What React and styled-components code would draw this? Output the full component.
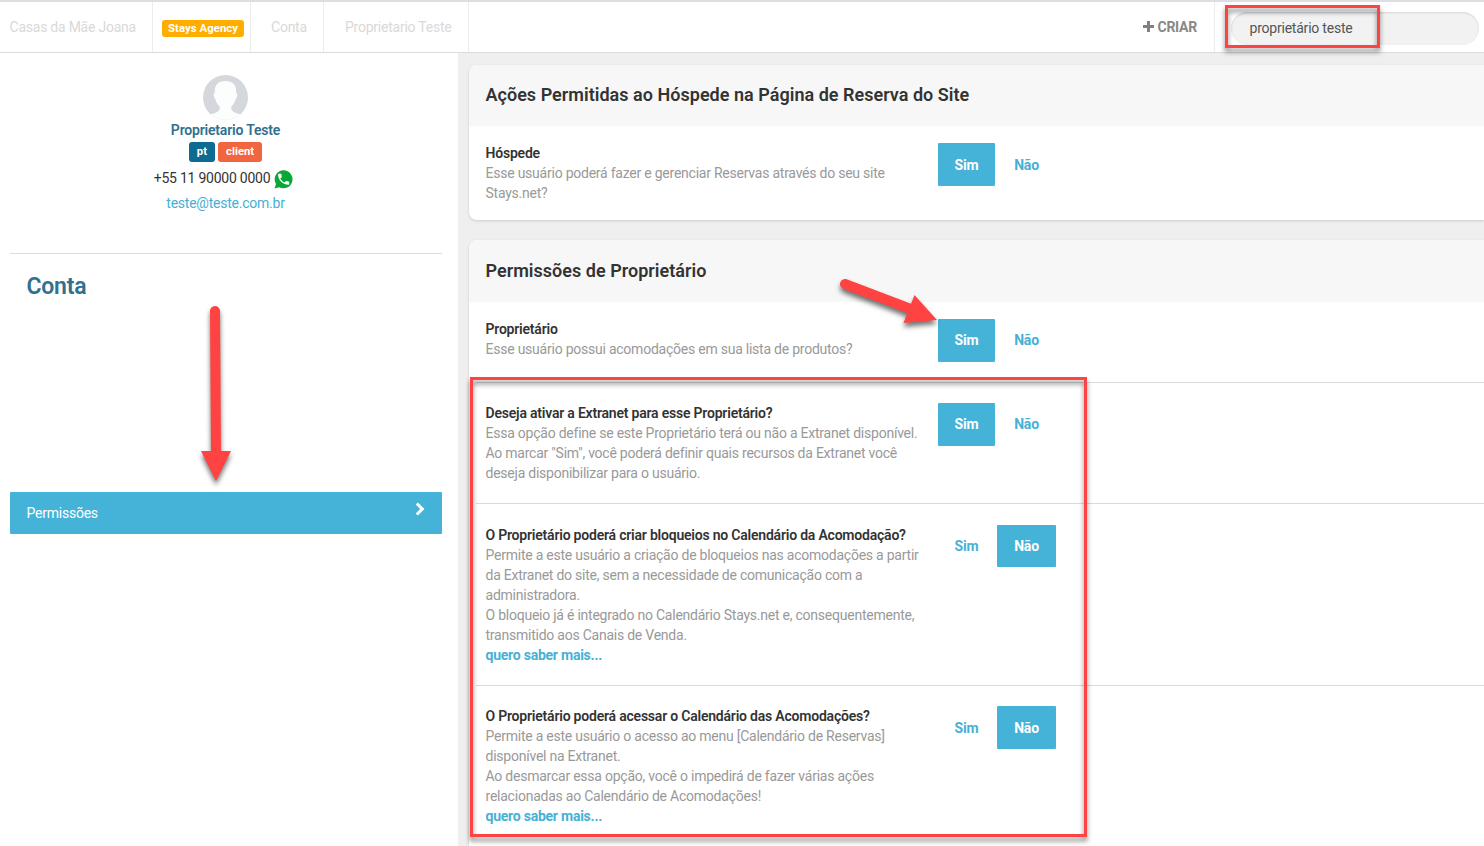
import React, { useState } from 'react'
import styled, { createGlobalStyle } from 'styled-components'

const permissions = [
    {
        title: 'Proprietário',
        lines: ['Esse usuário possui acomodações em sua lista de produtos?'],
        value: 'Sim',
        top: 17,
        lift: 2,
    },
    {
        title: 'Deseja ativar a Extranet para esse Proprietário?',
        lines: ['Essa opção define se este Proprietário terá ou não a Extranet disponível. Ao marcar "Sim", você poderá definir quais recursos da Extranet você deseja disponibilizar para o usuário.'],
        value: 'Sim',
        top: 20,
        lift: 2,
    },
    {
        title: 'O Proprietário poderá criar bloqueios no Calendário da Acomodação?',
        lines: [
            'Permite a este usuário a criação de bloqueios nas acomodações a partir da Extranet do site, sem a necessidade de comunicação com a administradora.',
            'O bloqueio já é integrado no Calendário Stays.net e, consequentemente, transmitido aos Canais de Venda.',
        ],
        more: true,
        value: 'Não',
        top: 21,
        lift: 1,
        height: 42,
    },
    {
        title: 'O Proprietário poderá acessar o Calendário das Acomodações?',
        lines: [
            'Permite a este usuário o acesso ao menu [Calendário de Reservas] disponível na Extranet.',
            'Ao desmarcar essa opção, você o impedirá de fazer várias ações relacionadas ao Calendário de Acomodações!',
        ],
        more: true,
        value: 'Não',
        top: 20,
    },
]

function Permission({ title, lines, more, value, top, lift = 0, height = 43, divided }) {
    const [selected, setSelected] = useState(value)
    return (
        <Row $top={top} $divided={divided}>
            <Description>
                <h3>{title}</h3>
                {lines.map(line => <p key={line}>{line}</p>)}
                {more && <a>quero saber mais...</a>}
            </Description>
            <Toggle>
                <Option $width={57} $height={height} $lift={lift} $active={selected === 'Sim'} onClick={() => setSelected('Sim')}>Sim</Option>
                <Option $width={59} $height={height} $lift={lift} $active={selected === 'Não'} onClick={() => setSelected('Não')}>Não</Option>
            </Toggle>
        </Row>
    )
}

function App() {
    const [search, setSearch] = useState('proprietário teste')
    return (
        <Page>
            <GlobalStyle />
            <TopBar>
                <Crumb $width={153} $left={9.5}>Casas da Mãe Joana</Crumb>
                <Crumb $width={98} $left={9}><Agency $color="#ffae00" $size={17} $pad={6}>Stays Agency</Agency></Crumb>
                <Crumb $width={73} $left={20}>Conta</Crumb>
                <Crumb $width={145} $left={21}>Proprietario Teste</Crumb>
                <Create>
                    <PlusIcon width="11" height="11" viewBox="0 0 11 11">
                        <path d="M4 0h3v4h4v3H7v4H4V7H0V4h4z" fill="#808080" />
                    </PlusIcon>
                    CRIAR
                </Create>
                <SearchArea>
                    <Search value={search} onChange={e => setSearch(e.target.value)} />
                </SearchArea>
            </TopBar>
            <Body>
                <Sidebar>
                    <Profile>
                        <Avatar width="45" height="45" viewBox="0 0 45 45">
                            <clipPath id="face"><circle cx="22.5" cy="22.5" r="22.5" /></clipPath>
                            <g clipPath="url(#face)">
                                <rect width="45" height="45" fill="#d4d7dc" />
                                <path d="M22.500 6C15 6 11.300 10.500 11.800 18c-1.800 0-1.500 4 0.500 6 0.800 3.500 2.700 6 4.500 7.800 0.400 4.200-3 5.700-9.300 7.700V46h30v-6.500c-6.300-2-9.700-3.500-9.300-7.700 1.800-1.800 3.700-4.300 4.500-7.800 2-2 2.300-6 0.500-6C33.700 10.500 30 6 22.500 6z" fill="#fcfdfd" />
                            </g>
                        </Avatar>
                        <Name>Proprietario Teste</Name>
                        <Tags>
                            <Badge $color="#0d6a90" $size={20} $pad={8}>pt</Badge>
                            <Badge $color="#f26541" $size={20} $pad={8}>client</Badge>
                        </Tags>
                        <Phone>
                            +55 11 90000 0000
                            <WhatsappIcon width="19" height="19" viewBox="0 0 19 19">
                                <path d="M9.700 0.300a9 9 0 1 1-4.500 16.900L0.500 18.600l1.500-4.700A9 9 0 0 1 9.700 0.300z" fill="#07a833" />
                                <path transform="translate(2.200 1.800) scale(.62)" d="M6.620 10.790c1.440 2.830 3.760 5.140 6.590 6.590l2.200-2.200c.27-.27.67-.36 1.020-.24 1.120.37 2.330.57 3.570.57.55 0 1 .45 1 1V20c0 .55-.45 1-1 1-9.390 0-17-7.610-17-17 0-.55.45-1 1-1h3.500c.55 0 1 .45 1 1 0 1.250.2 2.450.57 3.570.11.35.03.74-.25 1.020l-2.200 2.200z" fill="#fff" />
                            </WhatsappIcon>
                        </Phone>
                        <Email>teste@teste.com.br</Email>
                    </Profile>
                    <SideTitle>Conta</SideTitle>
                    <MenuItem>
                        Permissões
                        <svg width="10" height="14" viewBox="0 0 10 14">
                            <path d="M1.800 1.500L7.300 7l-5.500 5.500" fill="none" stroke="#fff" strokeWidth="3.100" />
                        </svg>
                    </MenuItem>
                </Sidebar>
                <Content>
                    <Card>
                        <CardHeader $height={61}>Ações Permitidas ao Hóspede na Página de Reserva do Site</CardHeader>
                        <Permission
                            title="Hóspede"
                            lines={['Esse usuário poderá fazer e gerenciar Reservas através do seu site Stays.net?']}
                            value="Sim"
                            top={17}
                        />
                    </Card>
                    <Card>
                        <CardHeader $height={62}>Permissões de Proprietário</CardHeader>
                        {permissions.map((item, i) => <Permission key={item.title} {...item} divided={i > 0} />)}
                    </Card>
                </Content>
            </Body>
            <Highlight $x={1225} $y={5} $w={155} $h={43} />
            <Highlight $x={470} $y={377} $w={617} $h={460} />
            <Arrows width="1484" height="846" viewBox="0 0 1484 846">
                <g>
                    <path d="M215 311L216 455" stroke="#ff4343" strokeWidth="10" strokeLinecap="round" />
                    <path d="M201 451h30l-15 30z" fill="#ff4343" />
                </g>
                <g>
                    <path d="M845 284L912 309.500" stroke="#ff4343" strokeWidth="10" strokeLinecap="round" />
                    <path d="M914.500 295L937 320l-33.500 3z" fill="#ff4343" />
                </g>
            </Arrows>
        </Page>
    )
}

const GlobalStyle = createGlobalStyle`
    * {
        box-sizing: border-box;
    }
    body {
        margin: 0;
        overflow: hidden;
        font-family: Roboto, sans-serif;
        font-size: 14px;
        line-height: 20px;
        letter-spacing: -0.235px;
        color: #333;
    }
    h3, p {
        margin: 0;
    }
    svg {
        display: block;
        flex: none;
    }
`

const Page = styled.div`
    position: relative;
    display: flex;
    flex-direction: column;
    width: 1484px;
    height: 846px;
    overflow: hidden;
    background: #fff;
`

const TopBar = styled.header`
    display: flex;
    flex: none;
    height: 53px;
    border-top: 2px solid #dedde2;
    border-bottom: 1px solid #dcdcdc;
`

const Crumb = styled.div`
    display: flex;
    align-items: center;
    width: ${p => p.$width}px;
    padding-left: ${p => p.$left}px;
    border-right: 1px solid #ececec;
    color: #d9d9d9;
    white-space: nowrap;
`

const Badge = styled.span`
    height: ${p => p.$size}px;
    line-height: ${p => p.$size - 1}px;
    padding: 0 ${p => p.$pad}px;
    border-radius: 3px;
    background: ${p => p.$color};
    color: #fff;
    font-size: 11.3px;
    font-weight: 700;
    letter-spacing: 0;
    white-space: nowrap;
`

const Agency = styled(Badge)`
    margin-top: 2px;
    line-height: 17px;
    letter-spacing: 0.08px;
`

const Create = styled.div`
    display: flex;
    align-items: center;
    gap: 3px;
    margin-left: auto;
    padding-right: 17px;
    border-right: 1px solid #ececec;
    color: #888;
    font-weight: 700;
`

const PlusIcon = styled.svg`
    margin-bottom: 2px;
`

const SearchArea = styled.div`
    width: 269px;
    padding: 10px 5px 0 16px;
`

const Search = styled.input`
    width: 248px;
    height: 33px;
    padding: 0 19px 2px 18.5px;
    border: 0;
    border-radius: 17px;
    outline: none;
    background: #f2f2f2;
    box-shadow: inset 0 1px 2px rgba(0, 0, 0, 0.12);
    color: #555;
    font: 14px Roboto, sans-serif;
    letter-spacing: -0.22px;
`

const Body = styled.div`
    display: flex;
    flex: 1;
    min-height: 0;
`

const Sidebar = styled.aside`
    width: 458px;
    padding: 0 16px 0 10px;
`

const Profile = styled.div`
    display: flex;
    flex-direction: column;
    align-items: center;
    height: 201px;
    padding-top: 22px;
    border-bottom: 1px solid #dcdcdc;
`

const Avatar = styled.svg`
    margin-right: 1px;
`

const Name = styled.div`
    margin-right: 1px;
    color: #31708f;
    font-weight: 600;
    letter-spacing: -0.19px;
`

const Tags = styled.div`
    display: flex;
    gap: 3px;
    margin: 2px 1px 0 0;
`

const Phone = styled.div`
    display: flex;
    align-items: center;
    gap: 4px;
    height: 20px;
    margin: 6px 5px 0 0;
`

const WhatsappIcon = styled.svg`
    margin-top: 2px;
`

const Email = styled.div`
    margin: 5px 1px 0 0;
    color: #46b0d5;
`

const SideTitle = styled.div`
    padding: 18px 16.5px 0;
    height: 238px;
    color: #31708f;
    font-size: 23px;
    font-weight: 600;
    line-height: 30px;
`

const MenuItem = styled.div`
    display: flex;
    justify-content: space-between;
    height: 42px;
    padding: 10px 17px 0 16.5px;
    border-radius: 1px;
    background: #45b2d7;
    color: #fff;
    line-height: 22px;
`

const Content = styled.main`
    flex: 1;
    padding: 12px 0 0 11px;
    background: #efefef;
    overflow: hidden;
`

const Card = styled.section`
    margin-bottom: 20px;
    border-radius: 8px 0 0 8px;
    background: #fff;
    box-shadow: 0 1px 3px rgba(0, 0, 0, 0.15);
    &:last-child {
        min-height: 640px;
    }
`

const CardHeader = styled.div`
    height: ${p => p.$height}px;
    padding-left: 16.5px;
    border-radius: 8px 0 0 0;
    background: #f7f7f7;
    font-size: 18px;
    font-weight: 600;
    letter-spacing: 0.025px;
    line-height: ${p => p.$height - 1}px;
`

const Row = styled.div`
    display: flex;
    margin-left: 7px;
    padding: ${p => p.$top}px 0 20px 9.5px;
    border-top: ${p => p.$divided ? '1px solid #dadada' : '0'};
    &:nth-child(2):last-child {
        padding-bottom: 17px;
    }
`

const Description = styled.div`
    width: 452.5px;
    padding-right: 16px;
    color: #999;

    h3 {
        color: #333;
        font-size: 14px;
        font-weight: 600;
        letter-spacing: -0.21px;
    }
    a {
        color: #46b0d5;
        font-weight: 700;
    }
`

const Toggle = styled.div`
    display: flex;
    gap: 2px;
`

const Option = styled.button`
    width: ${p => p.$width}px;
    height: ${p => p.$height}px;
    padding: 0 0 ${p => p.$lift}px;
    border: 0;
    border-radius: 1px;
    background: ${p => p.$active ? '#45b2d7' : 'transparent'};
    color: ${p => p.$active ? '#fff' : '#46b0d5'};
    font: 700 14px Roboto, sans-serif;
    letter-spacing: -0.2px;
    cursor: pointer;
`

const Highlight = styled.div`
    position: absolute;
    left: ${p => p.$x}px;
    top: ${p => p.$y}px;
    width: ${p => p.$w}px;
    height: ${p => p.$h}px;
    border: 3px solid #ff4343;
    filter: drop-shadow(0 4px 2.5px rgba(0, 0, 0, 0.5));
    pointer-events: none;
`

const Arrows = styled.svg`
    position: absolute;
    left: 0;
    top: 0;
    pointer-events: none;

    g {
        filter: drop-shadow(0 4px 2.5px rgba(0, 0, 0, 0.55));
    }
`

export default App
